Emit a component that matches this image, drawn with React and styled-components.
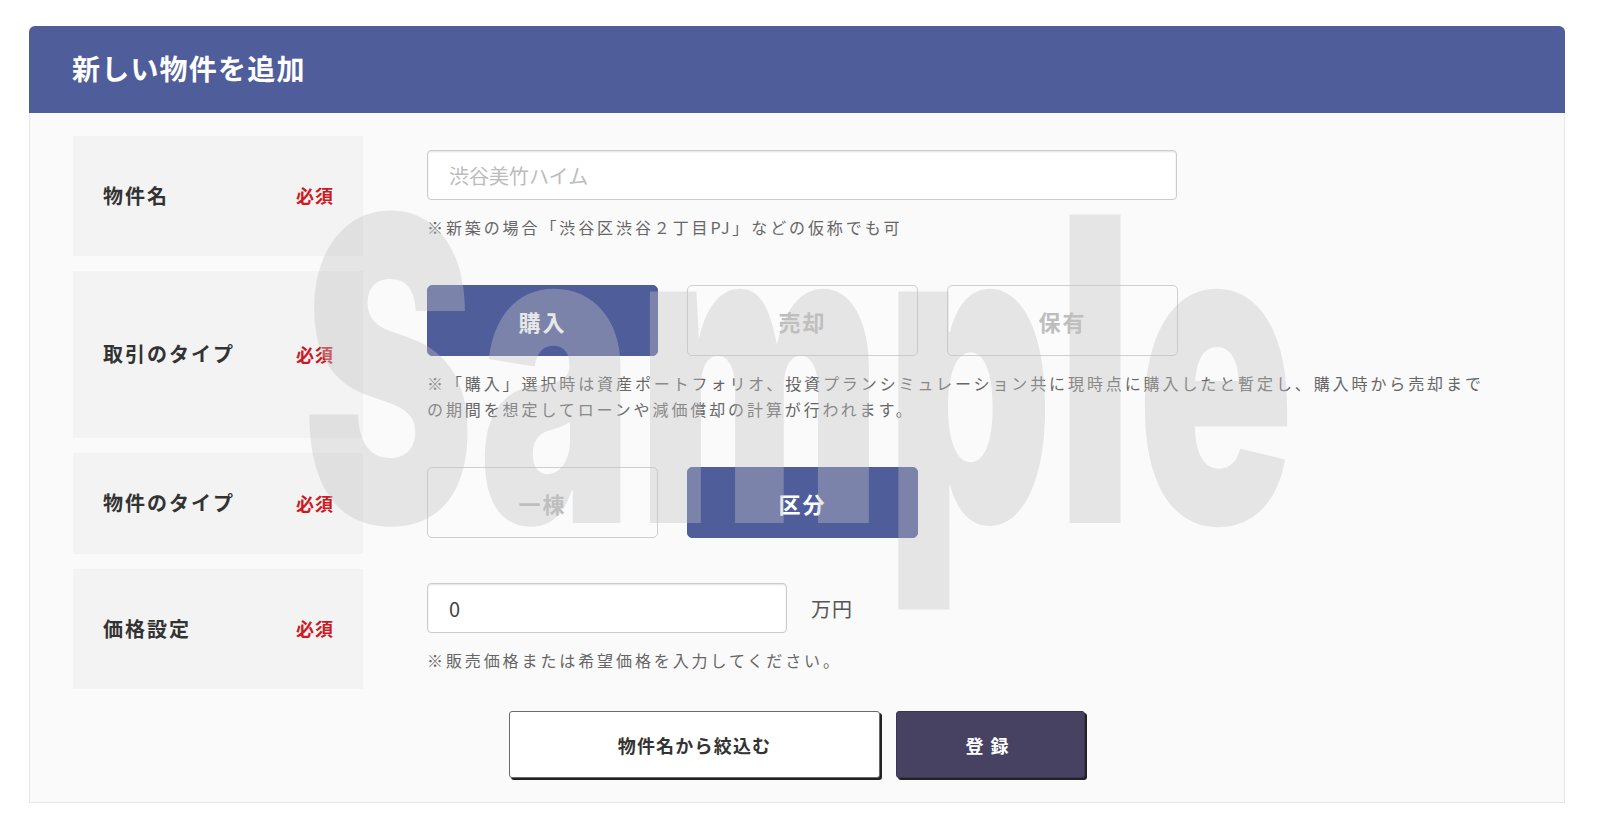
import React, { useState } from 'react';
import styled, { createGlobalStyle } from 'styled-components';

const GlobalStyle = createGlobalStyle`
  html, body { margin: 0; padding: 0; background: #ffffff; }
  body {
    font-family: "Noto Sans CJK JP", "Noto Sans", sans-serif;
    color: #333333;
  }
  * { box-sizing: border-box; }
`;

const Page = styled.div`
  padding: 26px 36px 24px 29px;
`;

const Card = styled.section`
  position: relative;
  width: 1536px;
`;

const Header = styled.header`
  height: 87px;
  display: flex;
  align-items: center;
  padding: 0 0 4px 43px;
  background: #4f5d9b;
  border-radius: 6px 6px 0 0;
  color: #ffffff;
  font-size: 28px;
  font-weight: 700;
  letter-spacing: 1.2px;
`;

const Body = styled.div`
  background: #fafafa;
  border: 1px solid #e6e6e6;
  border-top: none;
  padding: 23px 0 24px;
`;

const Rows = styled.div`
  display: flex;
  flex-direction: column;
  gap: 15px;
  padding-left: 43px;
`;

const Row = styled.div`
  display: grid;
  grid-template-columns: 290px 1fr;
  column-gap: 64px;
`;

const LabelCell = styled.div`
  display: flex;
  align-items: center;
  justify-content: space-between;
  padding: 0 29px 2px 30px;
  background: #f3f3f3;
`;

const LabelText = styled.span`
  font-size: 20px;
  font-weight: 700;
  letter-spacing: 2px;
  color: #333333;
`;

const Required = styled.span`
  font-size: 18px;
  font-weight: 700;
  letter-spacing: 1px;
  color: #cc1a24;
`;

const Field = styled.div`
  display: flex;
  flex-direction: column;
  align-items: flex-start;
  padding: 14px 0 16px;
`;

const TextInput = styled.input`
  width: ${(p) => p.$width}px;
  height: 50px;
  padding: 0 21px;
  border: 1px solid #cccccc;
  border-radius: 4px;
  background: #ffffff;
  box-shadow: inset 0 1px 2px rgba(0, 0, 0, 0.12);
  font-family: inherit;
  font-size: 20px;
  color: #444444;
  outline: none;
  &::placeholder { color: #bcbcbc; }
`;

const Hint = styled.p`
  margin: 14px 0 0;
  font-size: 16px;
  line-height: 26px;
  letter-spacing: 2.9px;
  color: #666666;
`;

const ToggleGroup = styled.div`
  display: flex;
  gap: 29px;
`;

const Toggle = styled.button`
  width: 231px;
  height: 71px;
  border-radius: 5px;
  border: 1px solid ${(p) => (p.$active ? '#4f5d9b' : '#cfcfcf')};
  background: ${(p) => (p.$active ? '#4f5d9b' : '#fbfbfb')};
  color: ${(p) => (p.$active ? '#ffffff' : '#bdbdbd')};
  font-family: inherit;
  font-size: 22px;
  font-weight: 700;
  letter-spacing: 2px;
  cursor: pointer;
`;

const PriceLine = styled.div`
  display: flex;
  align-items: center;
  gap: 24px;
`;

const Unit = styled.span`
  font-size: 20px;
  color: #555555;
  letter-spacing: 1px;
`;

const Actions = styled.div`
  display: flex;
  justify-content: center;
  gap: 16px;
  margin-top: 22px;
`;

const ActionButton = styled.button`
  width: ${(p) => p.$width}px;
  height: 67px;
  border-radius: 3px;
  border: 1px solid ${(p) => (p.$primary ? '#3a3550' : '#6a6a6a')};
  background: ${(p) => (p.$primary ? '#484262' : '#ffffff')};
  box-shadow: 2px 2px 0 #222222;
  color: ${(p) => (p.$primary ? '#ffffff' : '#333333')};
  font-family: inherit;
  font-size: 18px;
  font-weight: 700;
  letter-spacing: ${(p) => (p.$primary ? '7px' : '1.2px')};
  cursor: pointer;
`;

const Watermark = styled.div`
  position: absolute;
  left: 273px;
  top: 131px;
  font-family: Inter, "Liberation Sans", sans-serif;
  font-size: 424px;
  font-weight: 900;
  line-height: 1;
  letter-spacing: 6px;
  color: rgba(194, 194, 194, 0.38);
  transform: scaleX(0.612);
  transform-origin: left top;
  pointer-events: none;
  white-space: nowrap;
`;

export default function App() {
  const [trade, setTrade] = useState('購入');
  const [kind, setKind] = useState('区分');

  return (
    <Page>
      <GlobalStyle />
      <Card>
        <Header>新しい物件を追加</Header>
        <Body>
          <Rows>
            <Row>
              <LabelCell>
                <LabelText>物件名</LabelText>
                <Required>必須</Required>
              </LabelCell>
              <Field>
                <TextInput $width={750} placeholder="渋谷美竹ハイム" />
                <Hint>※新築の場合「渋谷区渋谷２丁目PJ」などの仮称でも可</Hint>
              </Field>
            </Row>
            <Row>
              <LabelCell>
                <LabelText>取引のタイプ</LabelText>
                <Required>必須</Required>
              </LabelCell>
              <Field>
                <ToggleGroup>
                  {['購入', '売却', '保有'].map((t) => (
                    <Toggle key={t} $active={trade === t} onClick={() => setTrade(t)}>
                      {t}
                    </Toggle>
                  ))}
                </ToggleGroup>
                <Hint>
                  ※「購入」選択時は資産ポートフォリオ、投資プランシミュレーション共に現時点に購入したと暫定し、購入時から売却まで
                  <br />
                  の期間を想定してローンや減価償却の計算が行われます。
                </Hint>
              </Field>
            </Row>
            <Row>
              <LabelCell>
                <LabelText>物件のタイプ</LabelText>
                <Required>必須</Required>
              </LabelCell>
              <Field>
                <ToggleGroup>
                  {['一棟', '区分'].map((t) => (
                    <Toggle key={t} $active={kind === t} onClick={() => setKind(t)}>
                      {t}
                    </Toggle>
                  ))}
                </ToggleGroup>
              </Field>
            </Row>
            <Row>
              <LabelCell>
                <LabelText>価格設定</LabelText>
                <Required>必須</Required>
              </LabelCell>
              <Field>
                <PriceLine>
                  <TextInput $width={360} defaultValue="0" />
                  <Unit>万円</Unit>
                </PriceLine>
                <Hint>※販売価格または希望価格を入力してください。</Hint>
              </Field>
            </Row>
          </Rows>
          <Actions>
            <ActionButton $width={371}>物件名から絞込む</ActionButton>
            <ActionButton $width={189} $primary>登録</ActionButton>
          </Actions>
        </Body>
        <Watermark aria-hidden="true">Sample</Watermark>
      </Card>
    </Page>
  );
}
